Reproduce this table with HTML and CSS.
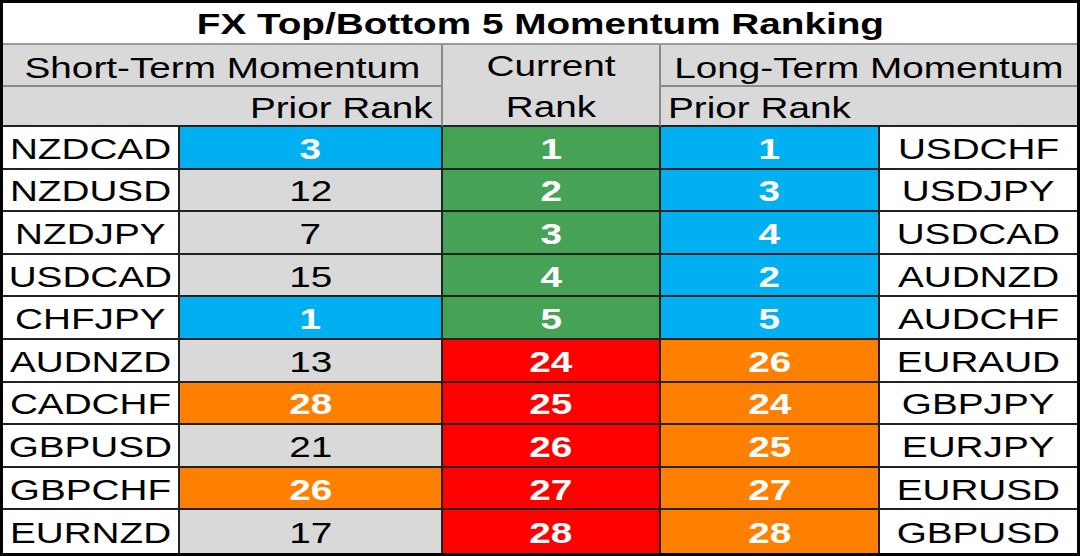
FILE: index.html
```html
<!DOCTYPE html>
<html>
<head>
<meta charset="utf-8">
<link rel="stylesheet" href="styles.css">
</head>
<body>
<div class="table">
  <div class="cell title span5"><span class="t">FX Top/Bottom 5 Momentum Ranking</span></div>

  <div class="cell head span2"><span class="t">Short-Term Momentum</span></div>
  <div class="cell head current"><span class="t">Current</span><span class="t">Rank</span></div>
  <div class="cell head span2"><span class="t">Long-Term Momentum</span></div>

  <div class="cell head span2 right"><span class="t tr">Prior Rank</span></div>
  <div class="cell head span2 left"><span class="t tl">Prior Rank</span></div>

  <div class="cell pair"><span class="t">NZDCAD</span></div>
  <div class="cell num blue"><span class="t">3</span></div>
  <div class="cell num green"><span class="t">1</span></div>
  <div class="cell num blue"><span class="t">1</span></div>
  <div class="cell pair end"><span class="t">USDCHF</span></div>

  <div class="cell pair"><span class="t">NZDUSD</span></div>
  <div class="cell num gray"><span class="t">12</span></div>
  <div class="cell num green"><span class="t">2</span></div>
  <div class="cell num blue"><span class="t">3</span></div>
  <div class="cell pair end"><span class="t">USDJPY</span></div>

  <div class="cell pair"><span class="t">NZDJPY</span></div>
  <div class="cell num gray"><span class="t">7</span></div>
  <div class="cell num green"><span class="t">3</span></div>
  <div class="cell num blue"><span class="t">4</span></div>
  <div class="cell pair end"><span class="t">USDCAD</span></div>

  <div class="cell pair"><span class="t">USDCAD</span></div>
  <div class="cell num gray"><span class="t">15</span></div>
  <div class="cell num green"><span class="t">4</span></div>
  <div class="cell num blue"><span class="t">2</span></div>
  <div class="cell pair end"><span class="t">AUDNZD</span></div>

  <div class="cell pair"><span class="t">CHFJPY</span></div>
  <div class="cell num blue"><span class="t">1</span></div>
  <div class="cell num green"><span class="t">5</span></div>
  <div class="cell num blue"><span class="t">5</span></div>
  <div class="cell pair end"><span class="t">AUDCHF</span></div>

  <div class="cell pair"><span class="t">AUDNZD</span></div>
  <div class="cell num gray"><span class="t">13</span></div>
  <div class="cell num red"><span class="t">24</span></div>
  <div class="cell num orange"><span class="t">26</span></div>
  <div class="cell pair end"><span class="t">EURAUD</span></div>

  <div class="cell pair"><span class="t">CADCHF</span></div>
  <div class="cell num orange"><span class="t">28</span></div>
  <div class="cell num red"><span class="t">25</span></div>
  <div class="cell num orange"><span class="t">24</span></div>
  <div class="cell pair end"><span class="t">GBPJPY</span></div>

  <div class="cell pair"><span class="t">GBPUSD</span></div>
  <div class="cell num gray"><span class="t">21</span></div>
  <div class="cell num red"><span class="t">26</span></div>
  <div class="cell num orange"><span class="t">25</span></div>
  <div class="cell pair end"><span class="t">EURJPY</span></div>

  <div class="cell pair"><span class="t">GBPCHF</span></div>
  <div class="cell num orange"><span class="t">26</span></div>
  <div class="cell num red"><span class="t">27</span></div>
  <div class="cell num orange"><span class="t">27</span></div>
  <div class="cell pair end"><span class="t">EURUSD</span></div>

  <div class="cell pair last"><span class="t">EURNZD</span></div>
  <div class="cell num gray last"><span class="t">17</span></div>
  <div class="cell num red last"><span class="t">28</span></div>
  <div class="cell num orange last"><span class="t">28</span></div>
  <div class="cell pair end last"><span class="t">GBPUSD</span></div>
</div>
</body>
</html>
```

FILE: styles.css
```css
html, body {
  margin: 0;
  padding: 0;
  background: #ffffff;
}

.table {
  box-sizing: border-box;
  width: 1080px;
  height: 556px;
  border: 3px solid #000;
  display: grid;
  grid-template-columns: 177px 263px 218px 219px 197px;
  grid-template-rows: 42px 42px 40px repeat(10, 1fr);
  font-family: "Liberation Sans", Arial, sans-serif;
  font-size: 30px;
  color: #000;
  overflow: hidden;
}

.cell {
  box-sizing: border-box;
  display: flex;
  align-items: center;
  justify-content: center;
  border-right: 2px solid #222;
  border-bottom: 2px solid #222;
  line-height: 1;
  white-space: nowrap;
  padding-top: 3px;
}

.t {
  display: inline-block;
  transform: scaleX(1.29);
  transform-origin: center;
}
.tr { transform-origin: right center; }
.tl { transform-origin: left center; }

.span5 { grid-column: span 5; }
.span2 { grid-column: span 2; }

.title {
  background: #fff;
  font-weight: bold;
  border-right: none;
  border-bottom: 2px solid #9a9a9a;
  padding-top: 2px;
}

.head {
  background: #d9d9d9;
  border-bottom: 2px solid #8a8a8a;
  border-right: 2px solid #8a8a8a;
  padding-top: 5px;
}
.head.span2:nth-child(4) { border-right: none; }

.current {
  grid-row: span 2;
  flex-direction: column;
  gap: 11px;
  border-bottom: 2px solid #222;
  padding-top: 3px;
}

.head.right {
  justify-content: flex-end;
  padding-right: 8px;
  padding-top: 3px;
  border-bottom: 2px solid #222;
}
.head.left {
  justify-content: flex-start;
  padding-left: 7px;
  padding-top: 3px;
  border-right: none;
  border-bottom: 2px solid #222;
}

.pair { background: #fff; }
.end { border-right: none; }
.last { border-bottom: none; }

.num { font-weight: bold; color: #fff; }
.num.gray { background: #d9d9d9; color: #000; font-weight: normal; }
.blue { background: #00b0f0; }
.green { background: #46a356; }
.red { background: #ff0000; }
.orange { background: #ff8000; }
```
